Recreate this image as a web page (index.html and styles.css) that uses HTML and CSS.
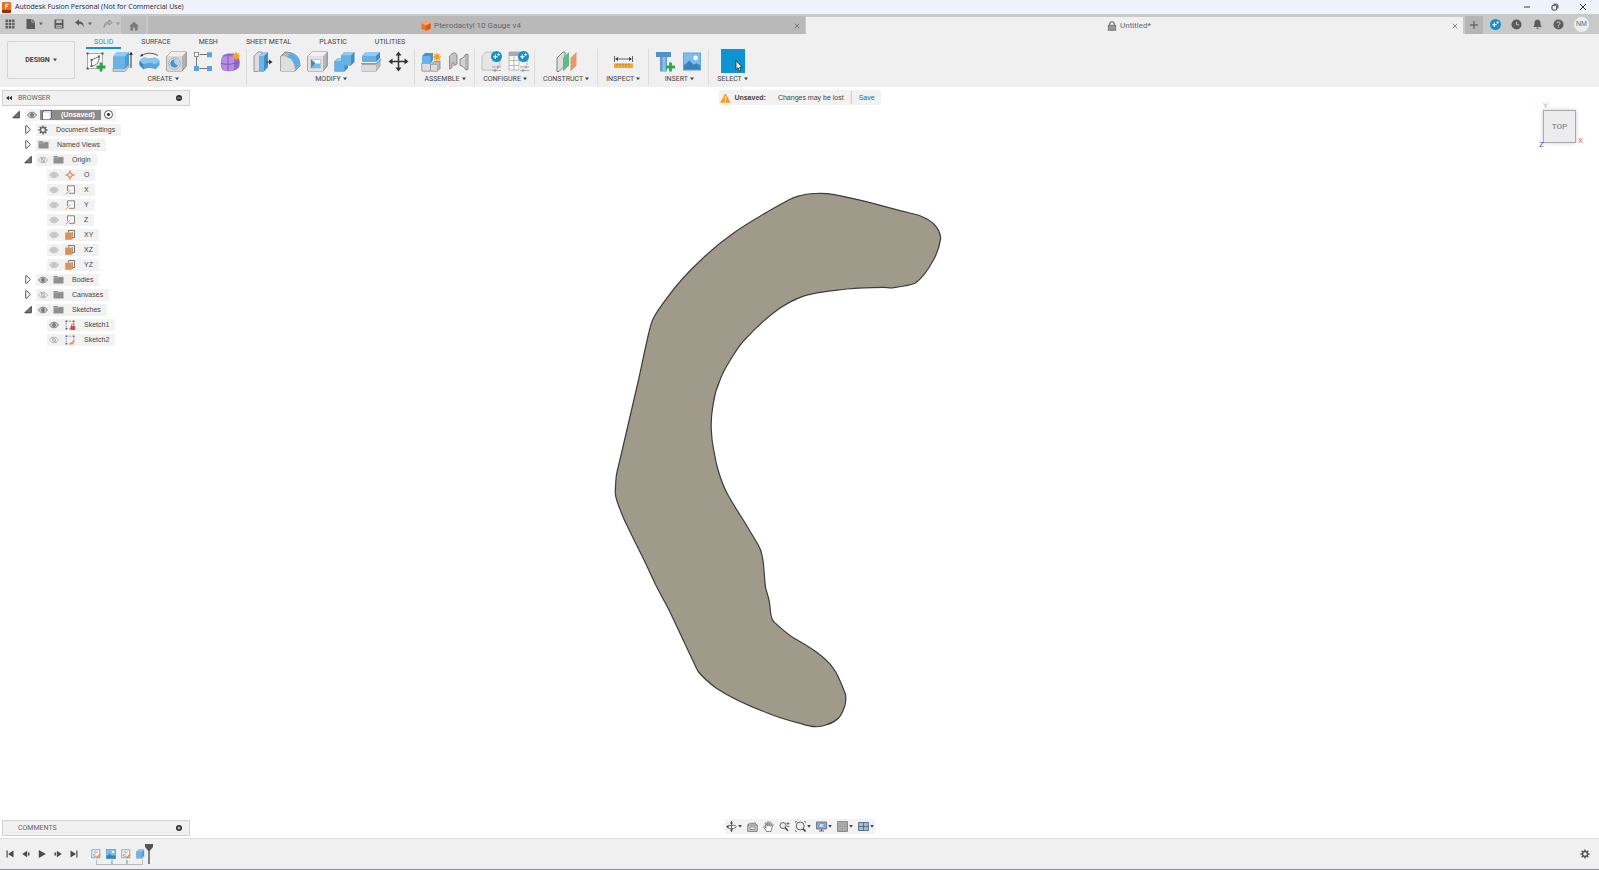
FILE: index.html
```html
<!DOCTYPE html>
<html lang="en">
<head>
    <meta charset="UTF-8">
    <meta name="viewport" content="width=device-width, initial-scale=1.0">
    <title>Autodesk Fusion Personal (Not for Commercial Use)</title>
    <link rel="stylesheet" href="styles.css">
</head>
<body>
    <!-- shared icons -->
    <svg class="defs" aria-hidden="true">
        <symbol id="caret" viewBox="0 0 5 4"><path d="M0 0h5L2.5 3.6z" fill="currentColor"/></symbol>
        <symbol id="close" viewBox="0 0 8 8"><path d="M1 1l6 6M7 1L1 7" stroke="currentColor" stroke-width="1" fill="none"/></symbol>
        <symbol id="eye" viewBox="0 0 10 8"><path d="M.5 4C2 1.800 3.400 1.200 5 1.200S8 1.800 9.500 4C8 6.200 6.600 6.800 5 6.800S2 6.200.5 4z" fill="#ccc" stroke="currentColor" stroke-width=".9"/><circle cx="5" cy="4" r="1.900" fill="currentColor"/></symbol>
        <symbol id="eye-off" viewBox="0 0 10 8"><path d="M.5 4C2 1.800 3.400 1.200 5 1.200S8 1.800 9.500 4C8 6.200 6.600 6.800 5 6.800S2 6.200.5 4z" fill="none" stroke="currentColor" stroke-width=".8"/><circle cx="5" cy="4" r="1.700" fill="none" stroke="currentColor" stroke-width=".8"/><path d="M2.500.8l5 6.400" stroke="currentColor" stroke-width=".8"/></symbol>
        <symbol id="folder" viewBox="0 0 11 9"><path d="M.5 1h4l1 1h5v6.500H.5z" fill="#8f8f8f"/><path d="M.5 2.800h5l1-1h4" stroke="#c4c4c4" stroke-width=".7" fill="none"/></symbol>
        <symbol id="closed" viewBox="0 0 8 10"><path d="M1.500.8v8.400h1.200L6.500 5 2.700.8z" fill="#fff" stroke="#444" stroke-width="1"/></symbol>
        <symbol id="open" viewBox="0 0 8 8"><path d="M7.300.8v6.500H.8z" fill="#777" stroke="#333" stroke-width=".9"/></symbol>
        <symbol id="gear" viewBox="0 0 10 10"><path d="M5 .4v9.200M.4 5h9.200M1.700 1.700l6.600 6.600M8.300 1.700L1.700 8.300" stroke="currentColor" stroke-width="1.500"/><circle cx="5" cy="5" r="3.200" fill="currentColor"/><circle cx="5" cy="5" r="1.800" fill="#f0f0f0"/></symbol>
        <symbol id="axis" viewBox="0 0 10 10"><path d="M2.500 6V.8h7v7.500H4" fill="#f8f8f8" stroke="#777" stroke-width=".9"/><path d="M.6 9.400L5.500 4.800" stroke="#e0905c" stroke-width="1"/></symbol>
        <symbol id="plane" viewBox="0 0 10 10"><path d="M3.500 2.500V.5h6v7H7.500" fill="none" stroke="#666" stroke-width=".9"/><path d="M.2 2.500h6.300v7.300H.2z" fill="#dd9058"/><path d="M6.500 2.500L7.800 1.800v6.700L6.500 9.800z" fill="#c57a45"/></symbol>
        <symbol id="sketch" viewBox="0 0 10 10"><rect x=".8" y=".8" width="8" height="8" fill="#fafafa" stroke="#7a94ad" stroke-width=".8"/><path d="M2.500 7V5.500h1.500L6.500 2.500" fill="none" stroke="#8aa" stroke-width=".8"/><path d="M2.500 3h3M2.500 7.200h3" stroke="#777" stroke-width=".7"/><path d="M5.500 9l3.800-3.700" stroke="#ee9a45" stroke-width="1.800"/></symbol>
        <symbol id="picture" viewBox="0 0 20 20"><rect width="20" height="20" fill="#5aa2dc"/><rect x="1" y="1" width="18" height="12" fill="#7dbdec"/><circle cx="14" cy="6" r="2.600" fill="#fff7d8"/><path d="M1 15l6-6 5 5 3-2 4 3v4H1z" fill="#3a82bd"/></symbol>
        <symbol id="extrude" viewBox="0 0 21 21"><path d="M1 17l4-4h12v3l-4 4.500H1z" fill="#c9c9c9" stroke="#888" stroke-width=".6"/><path d="M1 5.500L5 1h12v12.500l-4 4.500H1z" fill="#4b9bd8"/><path d="M1 5.500h12V18H1z" fill="#69b2e8"/><path d="M1 5.500L5 1h12l-4 4.500z" fill="#92cbf2"/></symbol>
        <symbol id="spark" viewBox="0 0 10 10"><path d="M5 0l1 3 2.700-1.700L7.200 4 10 5 7.200 6l1.500 2.700L6 7.200 5 10 4 7.200 1.300 8.700 2.800 6 0 5l2.800-1L1.300 1.300 4 3z" fill="#f5a31a"/></symbol>
        <symbol id="badge" viewBox="0 0 11 11"><circle cx="5.500" cy="5.500" r="5.500" fill="#1490d0"/><path d="M4.300 3.500v4.500M2.200 5.700h4.500" stroke="#fff" stroke-width="1.100"/><path d="M7.600 2.200v2.800M6.200 3.600H9" stroke="#fff" stroke-width=".8"/></symbol>
    </svg>

    <header class="titlebar">
        <svg class="logo" viewBox="0 0 9 11"><rect width="9" height="11" rx="1" fill="#ef6a1b"/><path d="M0 8h9v2a1 1 0 0 1-1 1H1a1 1 0 0 1-1-1z" fill="#8d3208"/><path d="M3.500 7V2.300h3M3.500 4.400h2.400" stroke="#fff" fill="none" stroke-width="1"/></svg>
        <span class="title">Autodesk Fusion Personal (Not for Commercial Use)</span>
        <div class="window-buttons">
            <button type="button" aria-label="Minimize"><svg viewBox="0 0 8 8"><path d="M1 4h6" stroke="#222" stroke-width=".9"/></svg></button>
            <button type="button" aria-label="Restore"><svg viewBox="0 0 8 8"><rect x="1" y="2.300" width="4.700" height="4.700" rx="1" fill="none" stroke="#222" stroke-width=".9"/><path d="M2.800 1.200h2.700a1.400 1.400 0 0 1 1.400 1.400v2.800" fill="none" stroke="#222" stroke-width=".9"/></svg></button>
            <button type="button" aria-label="Close"><svg viewBox="0 0 8 8"><path d="M1 1l6 6M7 1L1 7" stroke="#222" stroke-width=".9"/></svg></button>
        </div>
    </header>

    <div class="tabbar">
        <div class="quick">
            <button type="button" aria-label="Data panel"><svg class="i10" viewBox="0 0 10 10" fill="#5c5c5c"><path d="M.5.5h2.400v2.400H.5zM3.800.5h2.400v2.400H3.800zM7.100.5h2.400v2.400H7.100zM.5 3.800h2.400v2.400H.5zM3.800 3.800h2.400v2.400H3.800zM7.100 3.800h2.400v2.400H7.100zM.5 7.100h2.400v2.400H.5zM3.800 7.100h2.400v2.400H3.800zM7.100 7.100h2.400v2.400H7.100z"/></svg></button>
            <button type="button" aria-label="File"><svg class="i10" viewBox="0 0 10 10"><path d="M.5 0h5v3.500H9V10H.5z" fill="#5c5c5c"/><path d="M6.200 0L9 2.800H6.200z" fill="#5c5c5c"/></svg><svg class="caret"><use href="#caret"/></svg></button>
            <button type="button" aria-label="Save"><svg class="i10" viewBox="0 0 10 10"><path d="M.5.500h9v9h-9z" fill="#5c5c5c"/><path d="M2.300 1.300h5.400v2.700H2.300zM2.300 6h5.400v2.700H2.300z" fill="#c9c9c9"/><path d="M3 7.300h4" stroke="#5c5c5c" stroke-width=".8"/></svg></button>
            <button type="button" aria-label="Undo"><svg class="i10" viewBox="0 0 10 10"><path d="M0 3.500L4 .3v2.200c3.500 0 5 2.200 4.600 6C7.600 5.700 6.500 4.700 4 4.700v2z" fill="#5c5c5c"/></svg><svg class="caret"><use href="#caret"/></svg></button>
            <button type="button" class="disabled" aria-label="Redo"><svg class="i10" viewBox="0 0 10 10"><path d="M9.500 3.500L6 .8v2C2.800 2.800 1 4.600 1 8.500c1-2.800 2.400-4 5-4v1.900z" fill="#b5b5b5" stroke="#888" stroke-width=".7"/></svg><svg class="caret"><use href="#caret"/></svg></button>
        </div>
        <button type="button" class="home" aria-label="Home"><svg class="i10" viewBox="0 0 10 10"><path d="M5 .8L9.800 5.300H8.500V9.500H6V6.500H4v3H1.500V5.300H.2z" fill="#7a7a7a"/></svg></button>
        <div class="doc-tab">
            <a href="#doc1"><svg class="i10" viewBox="0 0 10 10"><path d="M5 .3l4.600 2v5.400L5 9.800.4 7.700V2.300z" fill="#ee7021"/><path d="M5 .3l4.600 2L5 4.500.4 2.300z" fill="#ffa968"/><path d="M5 4.500l4.600-2.200v5.400L5 9.800z" fill="#d95c10"/></svg>Pterodactyl 10 Gauge v4</a>
            <button type="button" aria-label="Close tab"><svg class="x"><use href="#close"/></svg></button>
        </div>
        <div class="doc-tab active">
            <a href="#doc2"><svg class="i10" viewBox="0 0 10 10"><path d="M2.700 4.500V3a2.300 2.300 0 0 1 4.600 0v1.500" fill="none" stroke="#6b6b6b" stroke-width="1.100"/><rect x="1.300" y="4.300" width="7.400" height="5" fill="#999" stroke="#6b6b6b" stroke-width=".8"/></svg>Untitled*</a>
            <button type="button" aria-label="Close tab"><svg class="x"><use href="#close"/></svg></button>
        </div>
        <button type="button" class="new-tab" aria-label="New tab"><svg class="i10" viewBox="0 0 10 10"><path d="M5 1v8M1 5h8" stroke="#6a6a6a" stroke-width="1.300"/></svg></button>
        <div class="account">
            <button type="button" aria-label="Extensions"><svg class="i11"><use href="#badge"/></svg></button>
            <button type="button" aria-label="Job status"><svg class="i11" viewBox="0 0 11 11"><circle cx="5.500" cy="5.500" r="5" fill="#5c5c5c"/><path d="M5.500 2.800v3h2.700" stroke="#c9c9c9" fill="none"/></svg></button>
            <button type="button" aria-label="Notifications"><svg class="i11" viewBox="0 0 11 11"><path d="M5.500.5c2.300.3 3 1.900 3 4 0 1.700.5 2.500 1.300 3.500H1.200C2 7 2.500 6.200 2.500 4.500c0-2.100.7-3.700 3-4zM4.300 8.800h2.400a1.200 1.200 0 0 1-2.400 0z" fill="#5c5c5c"/></svg></button>
            <button type="button" aria-label="Help"><svg class="i11" viewBox="0 0 11 11"><circle cx="5.500" cy="5.500" r="5" fill="#5c5c5c"/><path d="M4 4.200a1.500 1.500 0 1 1 2.300 1.300c-.6.400-.8.600-.8 1.200M5.500 7.500v1.100" stroke="#ddd" fill="none"/></svg></button>
            <button type="button" class="avatar">NM</button>
        </div>
    </div>

    <div class="ribbon">
        <button type="button" class="workspace">DESIGN <svg class="caret"><use href="#caret"/></svg></button>
        <div class="ribbon-main">
            <nav class="ribbon-tabs">
                <a href="#solid" class="current">SOLID</a>
                <a href="#surface">SURFACE</a>
                <a href="#mesh">MESH</a>
                <a href="#sheet">SHEET METAL</a>
                <a href="#plastic">PLASTIC</a>
                <a href="#utilities">UTILITIES</a>
            </nav>
            <div class="groups">
                <section class="group">
                    <div class="tools">
                        <button type="button" aria-label="Create Sketch"><svg viewBox="0 0 21 21"><path d="M2.500 2.500h15v15h-15z" fill="#f7f7f7" stroke="#888" stroke-width=".7"/><path d="M1.500 1.500h2v2h-2zM16.500 1.500h2v2h-2zM1.500 16.500h2v2h-2z" fill="#555"/><path d="M6.500 15V9l7.500-3.500C14.500 11 11.500 15 6.500 15z" fill="none" stroke="#666" stroke-width=".9"/><path d="M5.500 14h2v2h-2zM5.500 8h2v2h-2zM13 4.500h2v2h-2z" fill="#666"/><path d="M16 11.500v9M11.500 16h9" stroke="#23a847" stroke-width="2.800"/></svg></button>
                        <button type="button" aria-label="Extrude"><svg viewBox="0 0 21 21"><use href="#extrude"/><path d="M19 3v14" stroke="#333" stroke-width="1"/><path d="M19 .5l1.900 3.500h-3.800z" fill="#333"/></svg></button>
                        <button type="button" aria-label="Revolve"><svg viewBox="0 0 21 21"><path d="M2.500 4.500C7 1.500 14 1.500 19 4.500" fill="none" stroke="#444" stroke-width=".9"/><path d="M.8 5.500L3 2.500l1.300 2.500z" fill="#333"/><path d="M.5 10c1-2 3-3 5-3.500 3 1.200 7 1.200 10 0 2.500.5 4.500 2 5 3.500v4l-4 4.500c-3-2-9-2-12 0L.5 14z" fill="#58a6dd"/><path d="M.5 10c1-2 3-3 5-3.500 3 1.200 7 1.200 10 0 2.500.5 4.500 2 5 3.500l-4 3.500c-3-2-9-2-12 0z" fill="#8ac6ef"/><path d="M.5 10v4l4 4.500v-5z" fill="#3d89c4"/></svg></button>
                        <button type="button" aria-label="Hole"><svg viewBox="0 0 21 21"><path d="M.8 5.500L5 1h15.300v14L16 20H.8z" fill="#b3b3b3" stroke="#777" stroke-width=".8"/><path d="M1 5.500h15V20H1z" fill="#d6d6d6"/><path d="M1 5.500L5 1h15l-4 4.500z" fill="#efefef"/><circle cx="8.500" cy="12.500" r="5.500" fill="#fff" stroke="#777" stroke-width=".6"/><circle cx="8.500" cy="12.500" r="4.300" fill="#4d93c8"/><path d="M8 8.500a4.200 4.200 0 0 1 4.500 6C9 14 8 12 8 8.500z" fill="#a9d6f6"/></svg></button>
                        <button type="button" aria-label="Rectangular Pattern"><svg viewBox="0 0 21 21"><path d="M3.500 6v9M6.500 3.500h9M6.500 17.500h9" stroke="#666" stroke-width=".9"/><rect x="1.500" y="1.500" width="4" height="4" fill="#fff" stroke="#777" stroke-width=".8"/><path d="M14 1.200h5v5h-5zM1 15h5v5H1zM14 15h5v5h-5z" fill="#57a5dc"/></svg></button>
                        <button type="button" aria-label="Create Form"><svg viewBox="0 0 21 21"><path d="M3 4.500C6 2 13 2 17 4c3 3 3.500 9 1.500 13-4 3.500-11 4-16 2C0 15 .5 8 3 4.500z" fill="#9169cc"/><path d="M2.500 6c4-1.500 7-1.500 11 0 1 4 1 9 0 13.500-4 .8-8 .5-11-.5C.5 15 .5 10 2.500 6z" fill="#b88ce6"/><path d="M8 5v15M1 12.500c4 1 9 1 13 0l5-1.500M13.500 6L17 4" fill="none" stroke="#724ea8" stroke-width=".8"/><use href="#spark" x="11" y="0" width="10" height="10"/></svg></button>
                    </div>
                    <button type="button" class="label">CREATE<svg class="caret"><use href="#caret"/></svg></button>
                </section>
                <section class="group">
                    <div class="tools">
                        <button type="button" aria-label="Press Pull"><svg viewBox="0 0 21 21"><path d="M1 5L5 1h4v15l-4 4.500H1z" fill="#dcdcdc" stroke="#777" stroke-width=".7"/><path d="M6 5l4-4h5v15l-4 4.500H6z" fill="#3f8cc7"/><path d="M6 5h5v15.500H6z" fill="#6cb4e8"/><path d="M6 5l4-4h5l-4 4z" fill="#97cdf3"/><path d="M13 11h4" stroke="#333"/><path d="M16 8.500l3.500 2.500-3.500 2.500z" fill="#333"/></svg></button>
                        <button type="button" aria-label="Fillet"><svg viewBox="0 0 21 21"><path d="M.8 20V5L5 1c8 0 15 4 15 14l-5 5z" fill="#b5b5b5" stroke="#777" stroke-width=".8"/><path d="M1 5c8 0 14 5 14 15H1z" fill="#dedede"/><path d="M7 6L11 1.500c6 1.500 9 6 9 12L15 18C15 11 12 7.500 7 6z" fill="#5caee8"/></svg></button>
                        <button type="button" aria-label="Shell"><svg viewBox="0 0 21 21"><path d="M.8 5.500L5 1h15.300v14L16 20H.8z" fill="#b5b5b5" stroke="#777" stroke-width=".8"/><path d="M1 5.500h15V20H1z" fill="#e2e2e2"/><path d="M1 5.500L5 1h15l-4 4.500z" fill="#f1f1f1"/><path d="M4 8.500h9.500V17H4z" fill="#fff" stroke="#999" stroke-width=".5"/><path d="M4 8.500l4 3V17H4z" fill="#3d8ac5"/><path d="M4 17l4-4.500h5.500V17z" fill="#77bcee"/></svg></button>
                        <button type="button" aria-label="Combine"><svg viewBox="0 0 21 21"><path d="M7 4.500L10.500 1H20.500v10L17 14.500h-3V17l-3.500 3.500H.5V10L4 7h3z" fill="#3f8cc7"/><path d="M7 4.500h10v10h-6.500v6H.5V10H7z" fill="#67b0e5"/><path d="M7 4.500L10.500 1h10L17 4.500zM.5 10L4 7h3v3z" fill="#92caf1"/></svg></button>
                        <button type="button" aria-label="Split Body"><svg viewBox="0 0 21 21"><path d="M1 13.500h14l4-4V15l-4 5.500H1z" fill="#bdbdbd" stroke="#888" stroke-width=".6"/><path d="M1 14h14v6.500H1z" fill="#dadada"/><path d="M1 5l4-4h14v6l-4 4H1z" fill="#3f8cc7"/><path d="M1 5h14v6H1z" fill="#67b0e5"/><path d="M1 5l4-4h14l-4 4z" fill="#92caf1"/><path d="M0 12.500h15.500L20 8" stroke="#5ba9df" stroke-width="1.200" fill="none"/></svg></button>
                        <button type="button" aria-label="Move/Copy"><svg viewBox="0 0 21 21"><path d="M10.500 3v15M3 10.500h15" stroke="#333" stroke-width="1.500"/><path d="M10.500.5l3 4h-6zM10.500 20.500l3-4h-6zM.5 10.500l4-3v6zM20.500 10.500l-4-3v6z" fill="#333"/></svg></button>
                    </div>
                    <button type="button" class="label">MODIFY<svg class="caret"><use href="#caret"/></svg></button>
                </section>
                <section class="group">
                    <div class="tools">
                        <button type="button" aria-label="New Component"><svg viewBox="0 0 21 21"><path d="M1 12l2-2h6v10H1zM10 13.500l3-3h6v7L16.500 20H10z" fill="#bbb" stroke="#777" stroke-width=".7"/><path d="M1 12.500h8.500V20H1zM9.500 13.500h7V20h-7z" fill="#dedede" stroke="#888" stroke-width=".5"/><path d="M1 5l3-3h8v7l-2 3H1z" fill="#4694ce"/><path d="M1 5h8.500v7.500H1z" fill="#69b2e8"/><use href="#spark" x="11" y="1" width="10" height="10"/></svg></button>
                        <button type="button" aria-label="Joint"><svg viewBox="0 0 21 21"><path d="M1.500 5L5 2c3-.5 4 1 4 3v8l-3 1.500v-3L4 12.500v4l-2.500 1.500z" fill="#c4c4c4" stroke="#777" stroke-width=".8"/><path d="M12 8l3-1 3-4 2 .500v15l-2 .500-3-3.500-3-1z" fill="#d2d2d2" stroke="#777" stroke-width=".8"/><path d="M18 3v16" stroke="#888" stroke-width=".8"/></svg></button>
                    </div>
                    <button type="button" class="label">ASSEMBLE<svg class="caret"><use href="#caret"/></svg></button>
                </section>
                <section class="group">
                    <div class="tools">
                        <button type="button" aria-label="Configure Model"><svg viewBox="0 0 21 21"><path d="M1 19V7c0-3 3-6 6-6h6l6 5v9l-4 4z" fill="#e6e6e6" stroke="#b5b5b5" stroke-width=".8"/><path d="M11 16h9M11 19.500h9" stroke="#aaa" stroke-width="1"/><path d="M17 14.500v3M14 18v3" stroke="#999" stroke-width="1.200"/><use href="#badge" x="10" y="0" width="11" height="11"/></svg></button>
                        <button type="button" aria-label="Configuration Table"><svg viewBox="0 0 21 21"><path d="M1 1h18v18H1z" fill="#fafafa" stroke="#aaa" stroke-width=".8"/><path d="M1 1h18v4H1z" fill="#aaa"/><path d="M1 9.500h18M1 14.500h18M6 5v14M11 5v14" stroke="#aaa" stroke-width=".8"/><path d="M11 14h10v7H11z" fill="#f0f0f0"/><path d="M12 16h9M12 19.500h9" stroke="#aaa"/><path d="M18 14.500v3M15 18v3" stroke="#999" stroke-width="1.200"/><use href="#badge" x="10" y="0" width="11" height="11"/></svg></button>
                    </div>
                    <button type="button" class="label">CONFIGURE<svg class="caret"><use href="#caret"/></svg></button>
                </section>
                <section class="group single">
                    <div class="tools">
                        <button type="button" aria-label="Offset Plane"><svg viewBox="0 0 21 21"><path d="M1 7l6-6h2v13.500L3 20.500H1z" fill="#ddd" stroke="#777" stroke-width=".9"/><path d="M7 7l6-6v13.500l-6 6z" fill="#5dbb84"/><path d="M14.500 7l6-6v13.500l-6 6z" fill="#e59a6c"/></svg></button>
                    </div>
                    <button type="button" class="label">CONSTRUCT<svg class="caret"><use href="#caret"/></svg></button>
                </section>
                <section class="group single">
                    <div class="tools">
                        <button type="button" aria-label="Measure"><svg viewBox="0 0 21 21"><path d="M1.500 5v6M19.500 5v6M3 8h15" stroke="#555" stroke-width=".9"/><path d="M2 8l3-2v4zM19 8l-3-2v4z" fill="#444"/><path d="M1 12.500h19V17H1z" fill="#efab2d"/><path d="M4 12.500v2M7 12.500v2M10 12.500v2M13 12.500v2M16 12.500v2" stroke="#855" stroke-width=".6"/></svg></button>
                    </div>
                    <button type="button" class="label">INSPECT<svg class="caret"><use href="#caret"/></svg></button>
                </section>
                <section class="group">
                    <div class="tools">
                        <button type="button" aria-label="Insert Derive"><svg viewBox="0 0 21 21"><path d="M1 1h15v5H1z" fill="#4b93ca"/><path d="M5 6h7v14.500H5z" fill="#639fcd"/><path d="M7.500 6h3v14.500h-3z" fill="#8fc1e6"/><path d="M15.500 11.500v9M11 16h9" stroke="#2ba84a" stroke-width="2.800"/></svg></button>
                        <button type="button" aria-label="Canvas"><svg viewBox="0 0 21 21"><use href="#picture" x="1" y="1" width="18" height="19"/></svg></button>
                    </div>
                    <button type="button" class="label">INSERT<svg class="caret"><use href="#caret"/></svg></button>
                </section>
                <section class="group single">
                    <div class="tools">
                        <button type="button" class="selected" aria-label="Select"><svg viewBox="0 0 24 24"><path d="M15 11.500v9l2-1.800 1.400 3.200 1.500-.7-1.400-3h2.700z" fill="#fff" stroke="#222" stroke-width=".8"/></svg></button>
                    </div>
                    <button type="button" class="label">SELECT<svg class="caret"><use href="#caret"/></svg></button>
                </section>
            </div>
        </div>
    </div>

    <main class="viewport">
        <svg class="model" viewBox="0 87 1599 751" preserveAspectRatio="xMidYMid meet" role="img" aria-label="Sketch body">
            <path d="M800 195.700C807 193.500 822 192.500 833 194.300C846 196.500 860 200 873 203.300L900 210.700C908 213 914 213.500 920 215.700C926 218 930 220.500 933 223.300C938 228 940.500 233 940.700 238.300C939.500 246 937 254 933 260.700C928 270 921 279 915 283.300C910 285.500 900 286.800 891.700 288C889 288 886 287.300 883 287.300C870 287.500 858 288 846.700 289C834 290.500 820 291.500 813.300 293.700C800 296 791 301 780 308C768 316.500 753 330.500 743 341.700C738 347.500 734 354 730 360.500C726 367 722.500 373 720 380C716 389 714.500 395 713.300 403.300C711.500 413 710.800 421 711.300 430C711.500 437 712.500 444 713.700 450C715 456 715.500 460 716.700 465C719.500 476 723 486 728 495C732.500 503 738 512 743.300 520L758.300 545C760.500 549 761.700 552 762.300 556.700C764.500 567 764 578 765.700 588.300C767 593 768.500 597 769.300 601.700C770.300 607 770 611 771 615C771.500 618 772 619.500 773.300 621.300C779 626.500 786 633 793.300 637.700C801 642 809 646.500 816.700 652.300C823 657 829 662 833.300 668.300C838.500 675 842 685 845.700 695C846 699 845.800 702 845 705C843.500 710 841.500 715 838.300 718.300C835 721.500 831 723.500 826.700 724.700C822 726.500 819 727 815 726.700C810 726.500 805 724.800 800 723.300C789 720.500 777 717 766.700 712.700C749 706 732 698.500 716.700 688.500C710 683.500 703 677.500 698.500 672C697.700 671 697.300 670 696.800 669L670 612C665.500 603 660 593.500 655.500 584.500L645 562C640 552 635 542 630 531.700C625 522 619.500 509 616.700 500C615.700 497 615.200 494.500 615.300 491.700C615.500 485 615.700 479 616.700 473.300L622.700 448L638.500 380C642 364 645 349 648.300 335C650 327 651.500 321.500 654 317C657.500 310.500 662 304.500 666.700 298.300C676 285.500 688 272 700 261C710 251 721 242 733.300 233.300C744 225.500 755 219 766.700 212.300C774 208 782 203.500 790 199.300C793 197.800 797 196.500 800 195.700Z" fill="#a09a8a" stroke="#3c3c3a" stroke-width="1.200"/>
        </svg>

        <div class="panel browser-head">
            <button type="button" aria-label="Collapse"><svg class="rewind" viewBox="0 0 6 6"><path d="M3 .8v4.400L0 3zM6 .8v4.400L3 3z" fill="#333"/></svg></button>
            <h2>BROWSER</h2>
            <button type="button" aria-label="Hide browser"><svg class="dot" viewBox="0 0 6 6"><circle cx="3" cy="3" r="3" fill="#2b2b2b"/><path d="M1.500 3h3" stroke="#fff" stroke-width=".8"/></svg></button>
        </div>

        <ul class="tree">
            <li class="root">
                <svg class="toggle"><use href="#open"/></svg>
                <div class="node">
                    <svg class="eye"><use href="#eye"/></svg>
                    <span class="component"><svg class="icon" viewBox="0 0 10 10"><path d="M.5 2.500L2.500.5h7v7l-2 2h-7z" fill="#ddd" stroke="#444" stroke-width=".7"/><path d="M1 2.800h6.500v6.500H1z" fill="#fff"/></svg>(Unsaved)</span>
                    <input type="radio" name="active" aria-label="Activate component" checked>
                </div>
            </li>
            <li><svg class="toggle"><use href="#closed"/></svg><div class="node"><svg class="icon grey"><use href="#gear"/></svg><span>Document Settings</span></div></li>
            <li><svg class="toggle"><use href="#closed"/></svg><div class="node"><svg class="folder"><use href="#folder"/></svg><span>Named Views</span></div></li>
            <li><svg class="toggle"><use href="#open"/></svg><div class="node"><svg class="eye dim"><use href="#eye-off"/></svg><svg class="folder"><use href="#folder"/></svg><span>Origin</span></div></li>
            <li class="leaf"><div class="node"><svg class="eye faint"><use href="#eye"/></svg><svg class="icon" viewBox="0 0 10 10"><path d="M5 0v10M0 5h10" stroke="#e08b55" stroke-width="1"/><path d="M5 2.200L7.800 5 5 7.800 2.200 5z" fill="#fbe9dd" stroke="#e08b55" stroke-width="1.200"/></svg><span>O</span></div></li>
            <li class="leaf"><div class="node"><svg class="eye faint"><use href="#eye"/></svg><svg class="icon"><use href="#axis"/></svg><span>X</span></div></li>
            <li class="leaf"><div class="node"><svg class="eye faint"><use href="#eye"/></svg><svg class="icon"><use href="#axis"/></svg><span>Y</span></div></li>
            <li class="leaf"><div class="node"><svg class="eye faint"><use href="#eye"/></svg><svg class="icon"><use href="#axis"/></svg><span>Z</span></div></li>
            <li class="leaf"><div class="node"><svg class="eye faint"><use href="#eye"/></svg><svg class="icon"><use href="#plane"/></svg><span>XY</span></div></li>
            <li class="leaf"><div class="node"><svg class="eye faint"><use href="#eye"/></svg><svg class="icon"><use href="#plane"/></svg><span>XZ</span></div></li>
            <li class="leaf"><div class="node"><svg class="eye faint"><use href="#eye"/></svg><svg class="icon"><use href="#plane"/></svg><span>YZ</span></div></li>
            <li><svg class="toggle"><use href="#closed"/></svg><div class="node"><svg class="eye"><use href="#eye"/></svg><svg class="folder"><use href="#folder"/></svg><span>Bodies</span></div></li>
            <li><svg class="toggle"><use href="#closed"/></svg><div class="node"><svg class="eye dim"><use href="#eye-off"/></svg><svg class="folder"><use href="#folder"/></svg><span>Canvases</span></div></li>
            <li><svg class="toggle"><use href="#open"/></svg><div class="node"><svg class="eye"><use href="#eye"/></svg><svg class="folder"><use href="#folder"/></svg><span>Sketches</span></div></li>
            <li class="leaf"><div class="node"><svg class="eye"><use href="#eye"/></svg><svg class="icon" viewBox="0 0 10 10"><path d="M1.200 1.200h7.600v7.600H1.200z" fill="none" stroke="#777" stroke-width=".8" stroke-dasharray="2 1"/><path d="M.5.500h1.500v1.500H.5zM8 .500h1.500v1.500H8zM.5 8h1.500v1.500H.5z" fill="#666"/><rect x="5.500" y="6" width="4.500" height="4" fill="#d9434e"/><path d="M6.500 6.500V5.200a1.200 1.200 0 0 1 2.400 0v1.300" fill="none" stroke="#d9434e" stroke-width=".8"/></svg><span>Sketch1</span></div></li>
            <li class="leaf"><div class="node"><svg class="eye dim"><use href="#eye-off"/></svg><svg class="icon" viewBox="0 0 10 10"><path d="M1.200 1.200h7.600v7.600H1.200z" fill="none" stroke="#789" stroke-width=".8" stroke-dasharray="2 1"/><path d="M.5.500h1.500v1.500H.5zM8 .500h1.500v1.500H8zM.5 8h1.500v1.500H.5z" fill="#4d7ba6"/><path d="M5 9.500l4.500-4" stroke="#eca04f" stroke-width="1.700"/></svg><span>Sketch2</span></div></li>
        </ul>

        <div class="notice">
            <svg class="warn" viewBox="0 0 11 10"><path d="M5.500.3L10.800 9.700H.2z" fill="#f59c22"/><path d="M5.500 3.200v3.500M5.500 7.500v1.200" stroke="#fff" stroke-width="1.100"/></svg>
            <strong>Unsaved:</strong>
            <span>Changes may be lost</span>
            <a href="#save">Save</a>
        </div>

        <div class="viewcube">
            <span class="y">Y</span>
            <button type="button">TOP</button>
            <span class="z">Z</span>
            <span class="x-axis">X</span>
        </div>

        <div class="panel comments">
            <h2>COMMENTS</h2>
            <button type="button" aria-label="Add comment"><svg class="dot" viewBox="0 0 6 6"><circle cx="3" cy="3" r="3" fill="#2b2b2b"/><path d="M1.500 3h3M3 1.500v3" stroke="#fff" stroke-width=".8"/></svg></button>
        </div>

        <div class="navbar">
            <button type="button" aria-label="Orbit"><svg viewBox="0 0 11 11"><path d="M5.500 0v11M2 6.500c-4-2 10-3.500 8-.500C9 8 3 8.500 1 6" fill="none" stroke="#555" stroke-width=".9"/><path d="M5.500 0L7 2.500H4zM5.500 11L7 8.500H4zM0 5.500l2.500-1.500v3z" fill="#444"/></svg><svg class="caret"><use href="#caret"/></svg></button>
            <button type="button" aria-label="Look At"><svg viewBox="0 0 11 11"><path d="M.8 4h9.400v6.300H.8z" fill="#ddd" stroke="#666" stroke-width=".9"/><path d="M3 6h5v2.500H3z" fill="#fff" stroke="#668" stroke-width=".8"/><path d="M1 4l2-2.500M3.500 2.500h4M7.500 1l2 3" stroke="#666" fill="none" stroke-width=".8"/></svg></button>
            <button type="button" aria-label="Pan"><svg viewBox="0 0 11 11"><path d="M3.500 10.500L.8 6.300c-.5-1 .7-1.200 1.200-.500l1 1.200L2.200 2.500c0-1 1-1 1.200 0L4.300 5 4.500 1.200c0-1 1.200-1 1.200 0L6 5l.9-3.500c.3-.8 1.300-.5 1.200.3L7.700 5.500 8.900 3.400c.5-.7 1.300-.2 1.100.5L8.500 8l-.6 2.500z" fill="#fff" stroke="#555" stroke-width=".7"/></svg></button>
            <button type="button" aria-label="Zoom"><svg viewBox="0 0 11 11"><circle cx="4" cy="4.500" r="3" fill="#e5eef2" stroke="#555" stroke-width=".9"/><path d="M6 6.800l3 3" stroke="#444" stroke-width="1.600"/><path d="M9 1v3M7.500 2.500h3M7.700 5.300h2.800" stroke="#555" stroke-width=".8"/></svg></button>
            <button type="button" aria-label="Fit"><svg viewBox="0 0 11 11"><circle cx="5.200" cy="5" r="4" fill="#e8f1f0" stroke="#555" stroke-width=".9"/><path d="M7.800 7.600l2.700 2.900" stroke="#444" stroke-width="1.600"/><path d="M.5 2V.5H2M9 .5h1.500V2M.5 9v1.500H2" fill="none" stroke="#777" stroke-width=".8"/></svg><svg class="caret"><use href="#caret"/></svg></button>
            <button type="button" aria-label="Display Settings"><svg viewBox="0 0 11 11"><path d="M.6 1h9.800v7H.6z" fill="#8fb3dd" stroke="#667" stroke-width=".9"/><path d="M3 3.500L4.500 2.500H8v3L6.800 6.600H3z" fill="#c5daf2" stroke="#578" stroke-width=".5"/><path d="M5.500 8v2M3 10h5" stroke="#667"/></svg><svg class="caret"><use href="#caret"/></svg></button>
            <button type="button" aria-label="Grid and Snaps"><svg viewBox="0 0 11 11"><path d="M.6.600h9.800v9.800H.6z" fill="#b9b9b9" stroke="#777" stroke-width=".9"/><path d="M3 1v9M5.500 1v9M8 1v9M1 3h9M1 5.500h9M1 8h9" stroke="#8d8d95" stroke-width=".5"/></svg><svg class="caret"><use href="#caret"/></svg></button>
            <button type="button" aria-label="Viewports"><svg viewBox="0 0 11 11"><path d="M.6 1.500h9.800v8H.6z" fill="#9bbde6" stroke="#567" stroke-width=".9"/><path d="M5.500 1.500v8M.6 5.500h9.800" stroke="#567" stroke-width=".9"/></svg><svg class="caret"><use href="#caret"/></svg></button>
        </div>
    </main>

    <footer class="timeline">
        <div class="playback">
            <button type="button" aria-label="Go to start"><svg viewBox="0 0 8 8"><path d="M.5.500h1.200v7H.5zM7.500.5v7L2 4z" fill="#4a4a4a"/></svg></button>
            <button type="button" aria-label="Step back"><svg viewBox="0 0 8 8"><path d="M5.200.8v6.400L.2 4zM6 2.500h1.500v3H6z" fill="#4a4a4a"/></svg></button>
            <button type="button" aria-label="Play"><svg viewBox="0 0 8 8"><path d="M.8 0v8L7.800 4z" fill="#4a4a4a"/></svg></button>
            <button type="button" aria-label="Step forward"><svg viewBox="0 0 8 8"><path d="M2.800.8v6.400l5-3.200zM.5 2.500H2v3H.5z" fill="#4a4a4a"/></svg></button>
            <button type="button" aria-label="Go to end"><svg viewBox="0 0 8 8"><path d="M6.300.500h1.200v7H6.300zM.5.5v7L6 4z" fill="#4a4a4a"/></svg></button>
        </div>
        <div class="history">
            <button type="button" aria-label="Sketch1"><svg><use href="#sketch"/></svg></button>
            <button type="button" aria-label="Canvas"><svg><use href="#picture"/></svg></button>
            <button type="button" aria-label="Sketch2"><svg><use href="#sketch"/></svg></button>
            <button type="button" aria-label="Extrude"><svg><use href="#extrude"/></svg></button>
            <svg class="marker" viewBox="0 0 8 20"><path d="M0 0h8v3L5 6.500H3L0 3z" fill="#555"/><path d="M4 5v15" stroke="#444" stroke-width="1.300"/></svg>
        </div>
        <button type="button" class="settings" aria-label="Settings"><svg><use href="#gear"/></svg></button>
    </footer>
</body>
</html>
```

FILE: styles.css
```css
* {
    box-sizing: border-box;
}
body {
    margin: 0;
    height: 100vh;
    display: flex;
    flex-direction: column;
    font-family: "Liberation Sans", Arial, sans-serif;
    font-size: 7px;
    line-height: 10px;
    color: #444;
    background-color: #fff;
    overflow: hidden;
}
button {
    display: flex;
    align-items: center;
    justify-content: center;
    padding: 0;
    border: none;
    background: none;
    color: inherit;
    font: inherit;
    cursor: pointer;
}
a {
    color: inherit;
    text-decoration: none;
}
svg {
    display: block;
    flex-shrink: 0;
}
h2 {
    margin: 0;
    font-family: Roboto, sans-serif;
    font-size: 7px;
    font-weight: normal;
    color: #666;
}
.defs {
    position: absolute;
    width: 0;
    height: 0;
}
.caret {
    width: 4px;
    height: 4px;
}
.i10 {
    width: 10px;
    height: 10px;
}
.i11 {
    width: 11px;
    height: 11px;
}
.x {
    width: 6px;
    height: 6px;
}

/* title bar */
.titlebar {
    display: flex;
    align-items: center;
    height: 14px;
    padding: 0 12px 0 2px;
    gap: 4px;
    background-color: #eef2fa;
}
.logo {
    width: 9px;
    height: 11px;
}
.title {
    font-family: "Open Sans", sans-serif;
    color: #1d1d1d;
}
.window-buttons {
    display: flex;
    gap: 20px;
    margin-left: auto;
}
.window-buttons svg {
    width: 8px;
    height: 8px;
}

/* document tabs */
.tabbar {
    display: flex;
    height: 20px;
    padding-top: 2px;
    background-color: #c9c9c9;
    color: #666;
}
.quick {
    display: flex;
    gap: 11px;
    width: 121px;
    padding: 0 2px 2px 5px;
}
.quick button {
    gap: 3px;
}
.quick .disabled {
    color: #999;
}
.home {
    width: 25px;
    margin-right: 2px;
    padding-top: 2px;
    background-color: #bdbdbd;
}
.doc-tab {
    flex: 1;
    display: flex;
    align-items: center;
    padding: 2px 5px 0 0;
    background-color: #b9b9b9;
    font-family: Roboto, sans-serif;
    font-size: 8px;
}
.doc-tab a {
    flex: 1;
    display: flex;
    align-items: center;
    justify-content: center;
    gap: 3px;
}
.doc-tab.active {
    margin: 1px 2px 0 1px;
    padding-top: 1px;
    background-color: #f0f0f0;
}
.new-tab {
    width: 18px;
    background-color: #b5b5b5;
}
.account {
    display: flex;
    align-items: center;
    gap: 10px;
    padding: 0 10px 2px 7px;
}
.account .avatar {
    width: 15px;
    height: 15px;
    border-radius: 50%;
    background-color: #eee;
}

/* ribbon */
.ribbon {
    display: flex;
    height: 53px;
    padding-left: 7px;
    gap: 4px;
    background-color: #f0f0f0;
    font-family: Roboto, sans-serif;
}
.workspace {
    width: 68px;
    height: 38px;
    margin-top: 7px;
    gap: 3px;
    border: 1px solid #d4d4d4;
    border-radius: 2px;
    font-weight: bold;
}
.ribbon-tabs {
    display: flex;
    gap: 12px;
    height: 15px;
    padding-left: 7px;
}
.ribbon-tabs a {
    padding: 3px 8px 0;
    border-bottom: 2px solid transparent;
}
.ribbon-tabs .current {
    color: #1490d0;
    border-color: #1490d0;
}
.groups {
    display: flex;
}
.group {
    display: flex;
    flex-direction: column;
    align-items: center;
    padding: 0 5px 0 6px;
}
.group.single {
    padding: 0 8px;
}
.group:not(:last-child) {
    border-right: 1px solid #dcdcdc;
    height: 36px;
}
.tools {
    display: flex;
    align-items: center;
    gap: 6px;
    height: 24px;
}
.tools svg {
    width: 21px;
    height: 21px;
}
.tools .selected {
    background-color: #0c94d4;
}
.tools .selected svg {
    width: 24px;
    height: 24px;
}
.label {
    gap: 2px;
    margin-top: 1px;
}

/* viewport */
.viewport {
    position: relative;
    flex: 1;
    min-height: 0;
}
.model {
    position: absolute;
    width: 100%;
    height: 100%;
}
.panel {
    position: absolute;
    left: 2px;
    display: flex;
    align-items: center;
    width: 188px;
    height: 16px;
    padding: 0 7px 0 15px;
    border: 1px solid #d2d2d2;
    background-color: #f0f0f0;
}
.panel h2 {
    flex: 1;
}
.browser-head {
    top: 3px;
    padding-left: 3px;
    gap: 6px;
}
.rewind {
    width: 6px;
    height: 6px;
}
.dot {
    width: 6px;
    height: 6px;
}
.comments {
    bottom: 2px;
}
.tree {
    position: absolute;
    top: 20px;
    left: 0;
    margin: 0;
    padding: 0;
    list-style: none;
}
.tree li {
    display: flex;
    align-items: center;
    height: 15px;
    padding-left: 24px;
    gap: 4px;
}
.tree .root {
    padding-left: 12px;
    gap: 5px;
}
.tree .leaf {
    padding-left: 47px;
}
.toggle {
    width: 8px;
    height: 9px;
}
.node {
    display: flex;
    align-items: center;
    gap: 5px;
    height: 12px;
    padding: 0 6px 0 2px;
    background-color: #f2f2f2;
}
.leaf .node {
    gap: 6px;
}
.node span {
    padding-left: 3px;
}
.eye {
    width: 10px;
    height: 8px;
    color: #777;
}
.eye.dim {
    color: #a8a8a8;
}
.eye.faint {
    color: #c4c4c4;
}
.folder {
    width: 11px;
    height: 9px;
}
.icon {
    width: 10px;
    height: 10px;
}
.grey {
    color: #666;
}
.root .node {
    gap: 3px;
    padding-right: 3px;
}
.node .component {
    display: flex;
    align-items: center;
    gap: 9px;
    height: 10px;
    padding: 0 6px 0 2px;
    background-color: #8c8c8c;
    color: #fff;
    font-weight: bold;
}
.node input {
    appearance: none;
    width: 9px;
    height: 9px;
    margin: 0;
    border: 1px solid #555;
    border-radius: 50%;
    background: radial-gradient(#333 0 1px, #fff 2px);
}

.notice {
    position: absolute;
    top: 3px;
    left: 50%;
    transform: translateX(-50%);
    display: flex;
    align-items: center;
    height: 15px;
    padding-right: 6px;
    background-color: #f2f2f2;
    white-space: nowrap;
}
.warn {
    width: 11px;
    height: 10px;
    margin: 0 4px 0 1px;
}
.notice span {
    padding: 0 7px 0 12px;
}
.notice a {
    padding-left: 7px;
    border-left: 1px solid #ccc;
    line-height: 13px;
    color: #0b6cb5;
}

.viewcube {
    position: absolute;
    top: 23px;
    right: 23px;
    width: 33px;
    font-family: Roboto, sans-serif;
    font-size: 8px;
}
.viewcube button {
    width: 33px;
    height: 33px;
    border: 1px solid #a9a9a9;
    background-color: #ececee;
    box-shadow: 0 0 4px #ccc;
    color: #888d94;
    font-weight: 500;
}
.viewcube span {
    position: absolute;
}
.viewcube .y {
    top: -9px;
    left: 0;
    color: #6be36b;
}
.viewcube .z {
    top: 30px;
    left: -4px;
    color: #4444e6;
}
.viewcube .x-axis {
    top: 26px;
    left: 35px;
    color: #f06060;
}

.navbar {
    position: absolute;
    bottom: 4px;
    left: 50%;
    transform: translateX(-50%);
    display: flex;
    align-items: center;
    gap: 5px;
    height: 15px;
    padding: 0 1px;
    background-color: #f2f2f2;
}
.navbar button {
    gap: 1px;
}
.navbar svg {
    width: 11px;
    height: 11px;
}
.navbar .caret {
    width: 4px;
    height: 3px;
}

/* timeline */
.timeline {
    display: flex;
    align-items: center;
    height: 32px;
    padding: 0 9px 0 6px;
    border-top: 1px solid #e0e0e0;
    border-bottom: 1px solid #858d94;
    background-color: #f0f0f0;
    color: #555;
}
.playback {
    display: flex;
    gap: 8px;
}
.playback svg {
    width: 8px;
    height: 8px;
}
.history {
    display: flex;
    align-items: center;
    height: 20px;
    margin-left: 13px;
    gap: 5px;
}
.history button {
    position: relative;
}
.history button svg {
    width: 10px;
    height: 10px;
}
/* bracket under the feature icons */
.history button:not(:nth-child(4))::after {
    content: "";
    position: absolute;
    top: 11px;
    left: 5px;
    width: 15px;
    height: 4px;
    border: 1px solid #bbb;
    border-top: none;
}
.history .marker {
    width: 8px;
    height: 20px;
    margin-left: -6px;
}
.settings {
    margin-left: auto;
}
.settings svg {
    width: 10px;
    height: 10px;
}
```
